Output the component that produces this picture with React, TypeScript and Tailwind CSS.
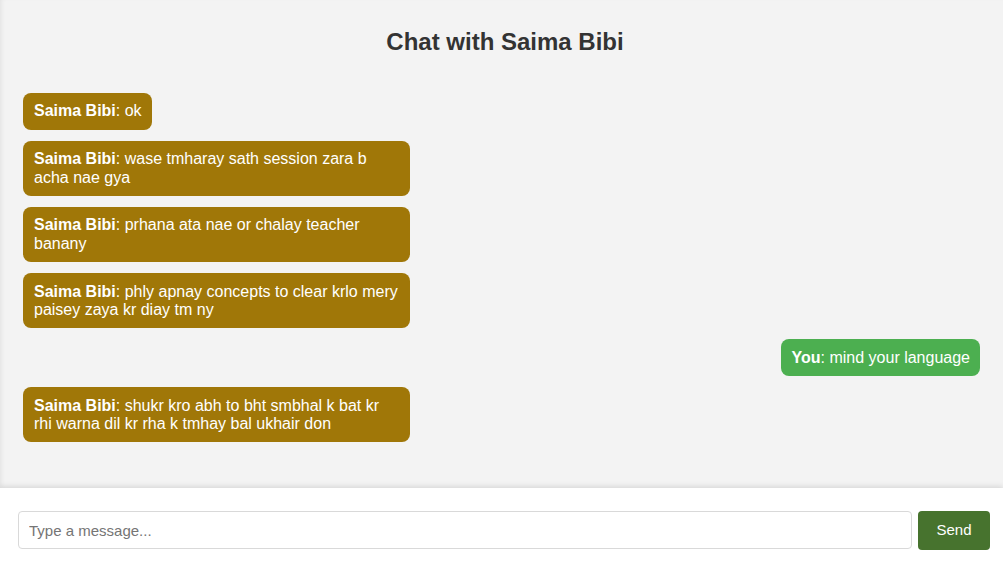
import React from "react";

type Msg = { from: "them" | "me"; text: string };

const messages: Msg[] = [
  { from: "them", text: "ok" },
  { from: "them", text: "wase tmharay sath session zara b acha nae gya" },
  { from: "them", text: "prhana ata nae or chalay teacher banany" },
  { from: "them", text: "phly apnay concepts to clear krlo mery paisey zaya kr diay tm ny" },
  { from: "me", text: "mind your language" },
  { from: "them", text: "shukr kro abh to bht smbhal k bat kr rhi warna dil kr rha k tmhay bal ukhair don" },
];

export default function App() {
  return (
    <div
      className="flex h-[570px] w-full flex-col overflow-hidden bg-white"
      style={{ fontFamily: '"Liberation Sans", Arial, sans-serif' }}
    >
      <div className="flex-1 bg-[#f3f3f3] shadow-[inset_4px_0_5px_-3px_rgba(0,0,0,0.08)]">
        <h2 className="pt-[28px] pl-[7px] text-center text-[24px] font-bold leading-[28px] text-[#333]">
          Chat with Saima Bibi
        </h2>
        <div className="mt-[37px] flex flex-col gap-[11px] px-[23px]">
          {messages.map((m, i) => (
            <div key={i} className={m.from === "me" ? "flex justify-end" : "flex justify-start"}>
              <div
                className={
                  "max-w-[387px] rounded-[8px] pl-[11px] pr-[10px] pt-[9.4px] pb-[9px] text-[16px] leading-[18.4px] text-white " +
                  (m.from === "me" ? "bg-[#4caf50]" : "bg-[#a07708]")
                }
              >
                <strong className="font-bold">{m.from === "me" ? "You" : "Saima Bibi"}</strong>: {m.text}
              </div>
            </div>
          ))}
        </div>
      </div>
      <div className="relative flex h-[82px] items-start gap-[6px] bg-white pl-[18px] pr-[13px] pt-[23px] shadow-[0_-2px_5px_rgba(0,0,0,0.1)]">
        <input
          autoFocus
          placeholder="Type a message..."
          className="h-[38px] flex-1 rounded-[4px] border border-[#d9d9d9] bg-white px-[10px] text-[15px] text-[#333] outline-none placeholder:text-[#757575]"
        />
        <button className="h-[39px] w-[72px] rounded-[4px] bg-[#47732e] text-[15px] text-white">
          Send
        </button>
      </div>
    </div>
  );
}
